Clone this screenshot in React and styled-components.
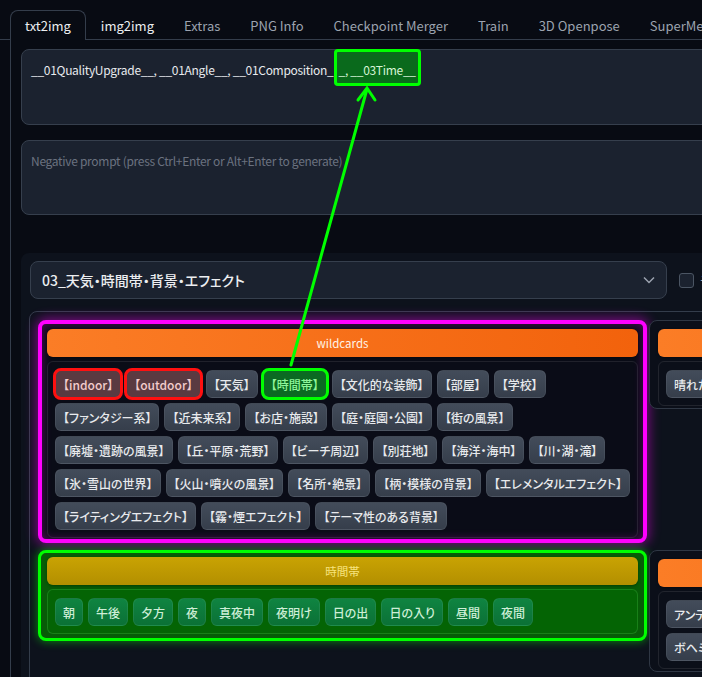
import React from 'react';
import styled, { createGlobalStyle, css } from 'styled-components';

const GlobalStyle = createGlobalStyle`
  html, body {
    margin: 0;
    padding: 0;
    background: #080b13;
    overflow: hidden;
  }
  body {
    font-family: "Noto Sans CJK JP", "Noto Sans", sans-serif;
    font-feature-settings: "palt";
    color: #e5e7eb;
  }
`;

const Page = styled.div`
  width: 1400px;
  padding-top: 10px;
  position: relative;
`;

const TabBar = styled.div`
  display: flex;
  padding-left: 10px;
  border-bottom: 1px solid #343d4b;
`;

const Tab = styled.div`
  height: 30px;
  box-sizing: border-box;
  padding: 0 14px;
  display: flex;
  align-items: center;
  font-size: 13px;
  white-space: nowrap;
  margin-bottom: -1px;
  border: 1px solid transparent;
  border-bottom: none;
  border-radius: 8px 8px 0 0;
  color: ${(p) => (p.$bright ? '#eceef1' : '#9ca3af')};
  ${(p) => p.$active && css`
    border-color: #343d4b;
    background: #080b13;
  `}
`;

const TabPanel = styled.div`
  margin-left: 10px;
  border-left: 1px solid #343d4b;
  padding: 9px 0 0 10px;
  height: 700px;
`;

const PromptBox = styled.div`
  height: ${(p) => p.$h}px;
  box-sizing: border-box;
  background: #1b222f;
  border: 1px solid #363f4d;
  border-radius: 8px;
  padding: 10px 9px;
  font-size: 12px;
  letter-spacing: ${(p) => (p.$placeholder ? -0.3 : -0.3)}px;
  line-height: 1.6;
  color: ${(p) => (p.$placeholder ? '#6b7280' : '#e8eaee')};
  & + & {
    margin-top: 15px;
  }
`;

const Marked = styled.span`
  padding: 9px 2px 5px;
  border: 3px solid #00ff00;
  border-radius: 4px;
  background: #0a6a1c;
  color: #d6f5d6;
`;

const Block = styled.div`
  margin-top: 38px;
  background: #0d121c;
  border-radius: 8px 0 0 0;
  padding: 8px 0 0 9px;
`;

const TopRow = styled.div`
  display: flex;
  align-items: center;
  gap: 12px;
`;

const Dropdown = styled.div`
  width: 637px;
  height: 38px;
  box-sizing: border-box;
  background: #1b222f;
  border: 1px solid #363f4d;
  border-radius: 8px;
  padding: 0 11px 0 11px;
  display: flex;
  align-items: center;
  justify-content: space-between;
  font-size: 14px;
  font-weight: 500;
  color: #eceef1;
`;

const Check = styled.div`
  width: 15px;
  height: 15px;
  box-sizing: border-box;
  border: 1px solid #4b5563;
  border-radius: 3px;
  background: #1b222f;
`;

const CheckLabel = styled.span`
  margin-left: -6px;
  font-size: 13px;
  color: #9ca3af;
  white-space: nowrap;
`;

const GridBox = styled.div`
  margin: 12px 0 0 -1px;
  border: 1px solid #343d4b;
  border-radius: 8px;
  padding: 8px;
  display: grid;
  grid-template-columns: 609px 609px;
  gap: 7px 2px;
  align-items: start;
`;

const highlights = {
  magenta: css`
    border: 4px solid #ff00ff;
    padding: 5px 5px 1px;
    background: #0a0c17;
    box-shadow: 0 0 12px 2px rgba(255, 0, 255, 0.45), inset 0 0 10px rgba(255, 0, 255, 0.3);
  `,
  green: css`
    border: 3px solid #00ff00;
    padding: 4px 6px 4px;
    background: #075c07;
    box-shadow: 0 0 8px 1px rgba(0, 255, 0, 0.45);
  `,
};

const Cell = styled.div`
  box-sizing: border-box;
  border: 1px solid #2f3744;
  border-radius: 8px;
  padding: 8px 8px 2px;
  background: #0b0f19;
  ${(p) => p.$hl && highlights[p.$hl]}
`;

const Header = styled.div`
  height: 28px;
  border-radius: 6px;
  margin-bottom: 4px;
  display: flex;
  align-items: center;
  justify-content: center;
  font-size: 11.5px;
  color: ${(p) => (p.$gold ? '#f7e37c' : '#fff4e8')};
  background: ${(p) => (p.$gold
    ? 'linear-gradient(180deg, #c9a303, #b38f00)'
    : 'linear-gradient(90deg, #fb7d26, #f2620c)')};
  box-shadow: 0 1px 3px rgba(0, 0, 0, 0.35);
`;

const ButtonBox = styled.div`
  border: 1px solid ${(p) => (p.$green ? 'rgba(120, 255, 120, 0.18)' : 'rgba(255, 255, 255, 0.09)')};
  border-radius: 6px;
  background: ${(p) => (p.$green ? '#046404' : 'transparent')};
  padding: 8px 7px 7px;
  display: flex;
  flex-direction: column;
  gap: 5px;
`;

const Row = styled.div`
  display: flex;
  gap: 5px;
`;

const buttonTones = {
  red: css`
    background: #5a3a41;
    color: #f3cccc;
    outline: 3px solid #ff1010;
    outline-offset: -1px;
  `,
  green: css`
    background: #0b6a22;
    color: #8ff59a;
    outline: 3px solid #00ff00;
    outline-offset: -1px;
  `,
  time: css`
    background: linear-gradient(180deg, #0f8441, #0b7136);
    color: #cdeed6;
    border-color: rgba(255, 255, 255, 0.07);
  `,
};

const Chip = styled.div`
  height: 28px;
  box-sizing: border-box;
  padding: 0 7px;
  display: inline-flex;
  align-items: center;
  white-space: nowrap;
  font-size: 12px;
  font-weight: 500;
  border-radius: 6px;
  border: 1px solid rgba(255, 255, 255, 0.06);
  background: linear-gradient(180deg, #434c5a, #363e4b);
  color: #e8eaed;
  ${(p) => p.$tone && buttonTones[p.$tone]}
`;

const Overlay = styled.svg`
  position: absolute;
  left: 0;
  top: 0;
  pointer-events: none;
`;

const wildcardRows = [
  [
    { label: '【indoor】', tone: 'red' },
    { label: '【outdoor】', tone: 'red' },
    { label: '【天気】' },
    { label: '【時間帯】', tone: 'green' },
    { label: '【文化的な装飾】' },
    { label: '【部屋】' },
    { label: '【学校】' },
  ],
  ['【ファンタジー系】', '【近未来系】', '【お店・施設】', '【庭・庭園・公園】', '【街の風景】'],
  ['【廃墟・遺跡の風景】', '【丘・平原・荒野】', '【ビーチ周辺】', '【別荘地】', '【海洋・海中】', '【川・湖・滝】'],
  ['【氷・雪山の世界】', '【火山・噴火の風景】', '【名所・絶景】', '【柄・模様の背景】', '【エレメンタルエフェクト】'],
  ['【ライティングエフェクト】', '【霧・煙エフェクト】', '【テーマ性のある背景】'],
];

const timeRows = [['朝', '午後', '夕方', '夜', '真夜中', '夜明け', '日の出', '日の入り', '昼間', '夜間']];
const weatherRows = [['晴れた日', '曇り', '雨', '雪', '嵐', '霧']];
const styleRows = [
  ['アンティーク', 'アールデコ', 'アジアン', '北欧', '和風'],
  ['ボヘミアン', 'ゴシック', 'モダン'],
];

const tabs = ['txt2img', 'img2img', 'Extras', 'PNG Info', 'Checkpoint Merger', 'Train', '3D Openpose', 'SuperMerger'];

const Buttons = ({ rows, tone, green }) => (
  <ButtonBox $green={green}>
    {rows.map((row, i) => (
      <Row key={i}>
        {row.map((item) => {
          const b = typeof item === 'string' ? { label: item } : item;
          return <Chip key={b.label} $tone={b.tone || tone}>{b.label}</Chip>;
        })}
      </Row>
    ))}
  </ButtonBox>
);

const Chevron = () => (
  <svg width="12" height="8" viewBox="0 0 12 8">
    <polyline points="1,1.5 6,6.5 11,1.5" fill="none" stroke="#9ca3af" strokeWidth="1.5" />
  </svg>
);

const App = () => (
  <Page>
    <GlobalStyle />
    <TabBar>
      {tabs.map((t, i) => (
        <Tab key={t} $active={i === 0} $bright={i < 2}>{t}</Tab>
      ))}
    </TabBar>
    <TabPanel>
      <PromptBox $h={76}>
        __01QualityUpgrade__, __01Angle__, __01Composition_<Marked>_, __03Time__</Marked>
      </PromptBox>
      <PromptBox $h={75} $placeholder>
        Negative prompt (press Ctrl+Enter or Alt+Enter to generate)
      </PromptBox>

      <Block>
        <TopRow>
          <Dropdown>
            03_天気・時間帯・背景・エフェクト
            <Chevron />
          </Dropdown>
          <Check />
          <CheckLabel>ランダム</CheckLabel>
        </TopRow>

        <GridBox>
          <Cell $hl="magenta">
            <Header>wildcards</Header>
            <Buttons rows={wildcardRows} />
          </Cell>
          <Cell>
            <Header>天気</Header>
            <Buttons rows={weatherRows} />
          </Cell>
          <Cell $hl="green">
            <Header $gold>時間帯</Header>
            <Buttons rows={timeRows} tone="time" green />
          </Cell>
          <Cell>
            <Header>文化的な装飾</Header>
            <Buttons rows={styleRows} />
          </Cell>
          <Cell>
            <Header>部屋</Header>
            <Buttons rows={[['リビング']]} />
          </Cell>
          <Cell>
            <Header>学校</Header>
            <Buttons rows={[['教室']]} />
          </Cell>
        </GridBox>
      </Block>
    </TabPanel>

    <Overlay width="702" height="677">
      <g stroke="#00ff00" strokeWidth="3" strokeLinecap="round" fill="none">
        <line x1="291" y1="365" x2="367" y2="89" />
        <polyline points="358,100 367,88 375,100" />
      </g>
    </Overlay>
  </Page>
);

export default App;
